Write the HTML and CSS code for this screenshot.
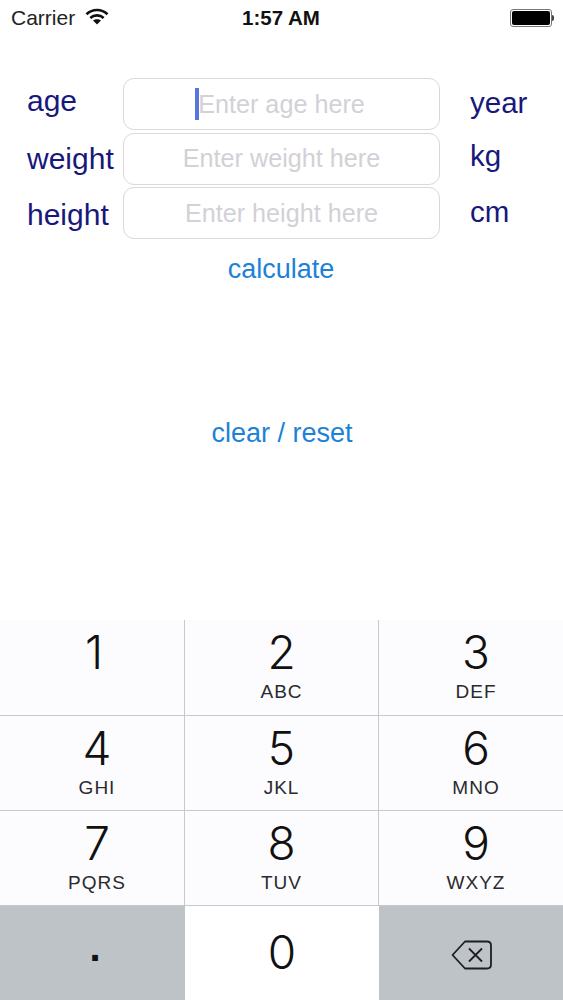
FILE: index.html
```html
<!DOCTYPE html>
<html lang="en">
<head>
    <meta charset="UTF-8">
    <meta name="viewport" content="width=device-width, initial-scale=1.0">
    <title>Calculator</title>
    <link rel="stylesheet" href="styles.css">
</head>
<body>
    <div class="status-bar">
        <div class="status-left">
            <span class="carrier">Carrier</span>
            <svg class="wifi" width="24" height="17" viewBox="0 0 24 17">
                <path d="M1.5 6.2C7.3 0.6 16.7 0.6 22.5 6.2" fill="none" stroke="#111" stroke-width="2.6"/>
                <path d="M5.3 10C9 6.5 15 6.5 18.7 10" fill="none" stroke="#111" stroke-width="2.6"/>
                <path d="M12 16.5L8 12.6C10.2 10.8 13.8 10.8 16 12.6Z" fill="#111"/>
            </svg>
        </div>
        <span class="time">1:57 AM</span>
        <div class="battery">
            <div class="battery-body"><div class="battery-fill"></div></div>
            <div class="battery-tip"></div>
        </div>
    </div>

    <div class="form">
        <div class="form-row">
            <span class="label label-age">age</span>
            <div class="field"><span class="caret"></span><span class="placeholder">Enter age here</span></div>
            <span class="unit unit-year">year</span>
        </div>
        <div class="form-row">
            <span class="label label-weight">weight</span>
            <div class="field"><span class="placeholder">Enter weight here</span></div>
            <span class="unit unit-kg">kg</span>
        </div>
        <div class="form-row">
            <span class="label label-height">height</span>
            <div class="field"><span class="placeholder">Enter height here</span></div>
            <span class="unit unit-cm">cm</span>
        </div>
    </div>

    <div class="action action-calculate">calculate</div>
    <div class="action action-clear">clear / reset</div>

    <div class="keyboard">
        <div class="key"><span class="digit digit-one">1</span></div>
        <div class="key"><span class="digit">2</span><span class="letters">ABC</span></div>
        <div class="key"><span class="digit">3</span><span class="letters">DEF</span></div>
        <div class="key"><span class="digit">4</span><span class="letters">GHI</span></div>
        <div class="key"><span class="digit">5</span><span class="letters">JKL</span></div>
        <div class="key"><span class="digit">6</span><span class="letters">MNO</span></div>
        <div class="key"><span class="digit">7</span><span class="letters">PQRS</span></div>
        <div class="key"><span class="digit">8</span><span class="letters">TUV</span></div>
        <div class="key"><span class="digit">9</span><span class="letters">WXYZ</span></div>
        <div class="key key-dark key-dot">.</div>
        <div class="key key-zero"><span class="digit">0</span></div>
        <div class="key key-dark key-delete">
            <svg width="42" height="30" viewBox="0 0 42 30">
                <path d="M14 1.500H36Q40 1.500 40 5.500V24.500Q40 28.500 36 28.500H14L1.500 15Z" fill="none" stroke="#1d1d22" stroke-width="1.800" stroke-linejoin="round"/>
                <path d="M18 8.500L31 21.500M31 8.500L18 21.500" fill="none" stroke="#1d1d22" stroke-width="1.800"/>
            </svg>
        </div>
    </div>
</body>
</html>
```

FILE: styles.css
```css
body {
    font-family: 'Liberation Sans', Arial, sans-serif;
    background-color: #ffffff;
    margin: 0;
    height: 1000px;
    display: flex;
    flex-direction: column;
    overflow: hidden;
}
.status-bar {
    height: 36px;
    padding: 0 9px 0 11px;
    display: grid;
    grid-template-columns: 1fr auto 1fr;
    align-items: center;
    color: #222222;
}
.status-left {
    display: flex;
    align-items: center;
    gap: 10px;
}
.carrier {
    font-size: 21px;
}
.wifi {
    margin-top: -3px;
}
.time {
    font-size: 20.500px;
    font-weight: bold;
    color: #111111;
    margin-left: -3px;
}
.battery {
    justify-self: end;
    display: flex;
    align-items: center;
}
.battery-body {
    width: 38px;
    height: 14px;
    padding: 1px;
    border: 1px solid #777777;
    border-radius: 3px;
}
.battery-fill {
    height: 100%;
    background-color: #000000;
    border-radius: 2px;
}
.battery-tip {
    width: 2px;
    height: 6px;
    background-color: #444444;
    border-radius: 0 2px 2px 0;
}
.form {
    margin-top: 42px;
    display: flex;
    flex-direction: column;
    gap: 2.500px;
}
.form-row {
    display: grid;
    grid-template-columns: 123px 317px 1fr;
    height: 52px;
    align-items: center;
    font-size: 30px;
    color: #18187c;
}
.label {
    padding-left: 27px;
}
.label-age {
    margin-top: -7px;
}
.label-weight {
    margin-top: 0;
}
.label-height {
    margin-top: 3px;
}
.unit {
    padding-left: 30px;
    font-size: 29.500px;
}
.unit-year {
    margin-top: -3px;
}
.unit-kg {
    margin-top: -6px;
}
.unit-cm {
    margin-top: -2px;
}
.field {
    height: 100%;
    box-sizing: border-box;
    border: 1px solid #d9d9dc;
    border-radius: 11px;
    display: flex;
    align-items: center;
    justify-content: center;
    font-size: 25.200px;
    color: #d2d1d6;
}
.caret {
    width: 4px;
    height: 32px;
    margin-left: -3px;
    margin-right: -1px;
    background-color: #5a76dc;
}
.action {
    text-align: center;
    font-size: 27px;
    color: #1c82d6;
}
.action-calculate {
    margin-top: 15px;
    margin-left: -1px;
}
.action-clear {
    margin-top: 133px;
    margin-left: 1px;
}
.keyboard {
    margin-top: auto;
    height: 380px;
    display: grid;
    grid-template-columns: 185px 194px 184px;
    grid-template-rows: 96px 95px 95px 94px;
    background-color: #fcfbfd;
}
.key {
    box-sizing: border-box;
    border-right: 1px solid #c9c9cd;
    border-bottom: 1px solid #c9c9cd;
    display: flex;
    flex-direction: column;
    align-items: center;
    color: #111111;
}
.key:nth-child(3n) {
    border-right: none;
}
.key:nth-child(3n+1),
.key:nth-child(3n) {
    padding-left: 10px;
}
.digit {
    font-family: 'Inter', 'Liberation Sans', sans-serif;
    font-weight: 300;
    font-size: 46px;
    line-height: 56px;
    margin-top: 4px;
}
.digit-one {
    margin-left: -6px;
}
.letters {
    font-size: 19px;
    line-height: 20px;
    letter-spacing: 1px;
    color: #2a2a2e;
    margin-top: 2px;
}
.key-dark {
    background-color: #bec3c8;
    border: none;
}
.key.key-dot {
    font-size: 40px;
    font-weight: bold;
    padding: 19px 0 0 5px;
}
.key-zero {
    background-color: #ffffff;
    border: none;
    padding-top: 14px;
}
.key-delete {
    justify-content: center;
    padding: 4px 8px 0 0;
}
```
